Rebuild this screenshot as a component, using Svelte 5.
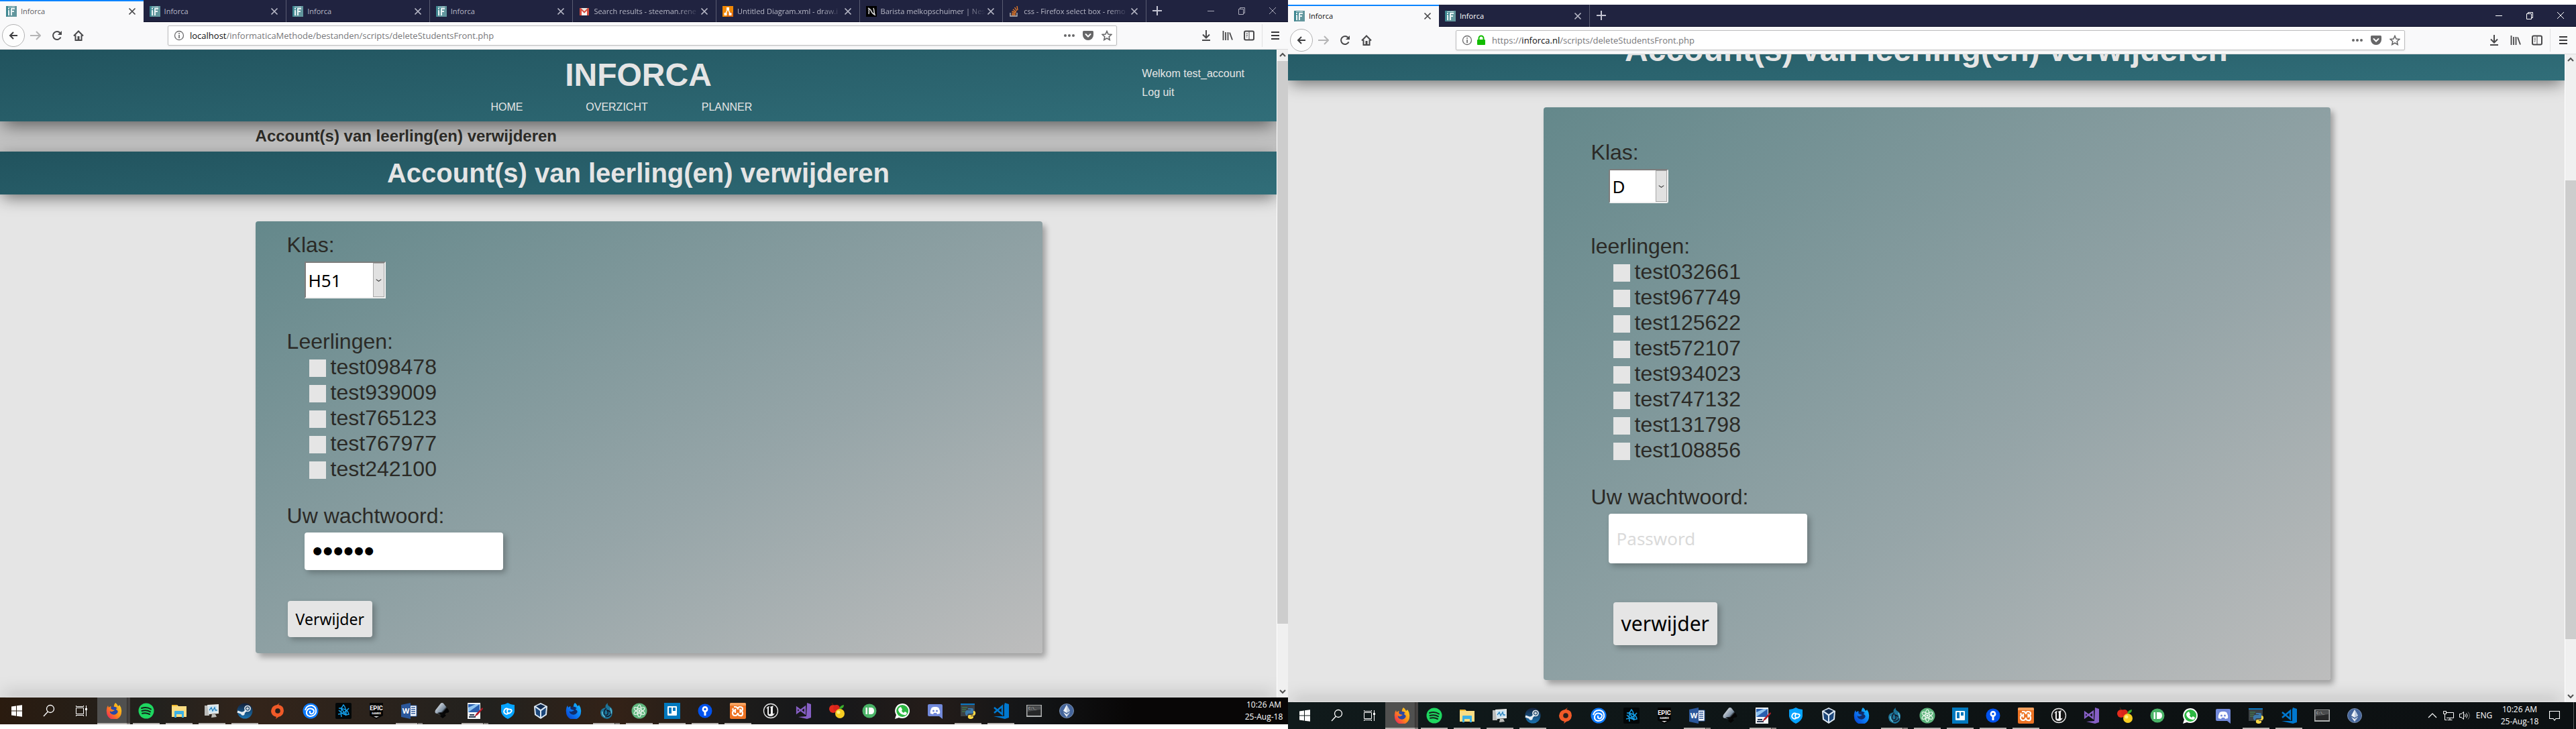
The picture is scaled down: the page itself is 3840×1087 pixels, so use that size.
<script>
  const titleText = 'Account(s) van leerling(en) verwijderen';

  const favicons = {
    inforca:
      '<rect width="16" height="16" fill="#3f8791"/><path d="M9 0h7v16H2z" fill="#8fa9ad" opacity=".45"/><path d="M3 3h2v2H3zM3 6h2v8H3z" fill="#e8f2f3"/><path d="M7 3h6v2H9v2h3v2H9v5H7z" fill="#e8f2f3"/><path d="M3 1h10v1H3z" fill="#cfe0e2"/>',
    gmail:
      '<path d="M1 3h14v11H1z" fill="#e9e6e2"/><path d="M1 3h2l5 5 5-5h2v11h-3V7l-4 4-4-4v7H1z" fill="#d54b3d"/><path d="M4 7l4 4 4-4v7H4z" fill="#f6f4f2"/>',
    draw:
      '<rect width="16" height="16" fill="#f08705"/><path d="M9 9h7v7H6z" fill="#df6c0c"/><path d="M8 4L4.500 12M8 4l3.500 8" stroke="#fff" stroke-width="1.500"/><path d="M6 2h4v4H6zM2.500 10h4v4h-4zM9.500 10h4v4h-4z" fill="#fff"/>',
    nespresso:
      '<rect width="16" height="16" fill="#000"/><path d="M3 3q4 2 5 5t5 5q-1-3-1-5t-1-5M4 5q1 3 0 7" fill="none" stroke="#ddd" stroke-width="1.500"/>',
    stack:
      '<path d="M2 10v5h10v-5" fill="none" stroke="#bcbbbb" stroke-width="1.400"/><path d="M4 13h6M4 10.500l6 .7M4.500 8l6 1.700M6 5l5 3.500M8.500 2l3.500 5M12 0l1 6" stroke="#f48024" stroke-width="1.300"/>'
  };

  const glyphs = {
    back: '<path d="M14 8H3M8 3L3 8l5 5" fill="none" stroke="#3e3e40" stroke-width="2"/>',
    forward: '<path d="M0 8h14M9 2l6 6-6 6" fill="none" stroke="#b5b5b6" stroke-width="2"/>',
    reload: '<path d="M13.500 10.500A6 6 0 1 1 12.500 4" fill="none" stroke="#48484a" stroke-width="2"/><path d="M9 7h6V1z" fill="#48484a"/>',
    home: '<path d="M1 8.500L8 1.500l7 7M3.500 7.500V15h9V7.500" fill="none" stroke="#48484a" stroke-width="2"/><path d="M6.500 9h3v6h-3z" fill="#48484a"/>',
    info: '<circle cx="8" cy="8" r="6.500" fill="none" stroke="#6d6d6e" stroke-width="1.300"/><path d="M7.200 7h1.700v5H7.200zM7.200 4h1.700v1.700H7.200z" fill="#6d6d6e"/>',
    lock: '<path d="M4.500 8V5a3.500 3.500 0 0 1 7 0v3" fill="none" stroke="#12bc00" stroke-width="2"/><rect x="2" y="7" width="12" height="8" rx="1" fill="#12bc00"/>',
    dots: '<g fill="#676768"><circle cx="2" cy="8" r="2"/><circle cx="8" cy="8" r="2"/><circle cx="14" cy="8" r="2"/></g>',
    pocket: '<path d="M1.500 1h13q1.500 0 1.500 1.500V7A8 8 0 0 1 0 7V2.500Q0 1 1.500 1z" fill="#676768"/><path d="M4.500 6L8 9.500 11.500 6" fill="none" stroke="#fff" stroke-width="2" stroke-linecap="round"/>',
    star: '<path d="M8 1.500l2 4.500 4.800.5-3.600 3.200 1 4.800L8 12l-4.200 2.500 1-4.800L1.200 6.500 6 6z" fill="none" stroke="#676768" stroke-width="1.600"/>',
    download: '<path d="M8 0v11M3 6.500L8 11.500l5-5M2 15h12" fill="none" stroke="#48484a" stroke-width="2"/>',
    library: '<path d="M1.500 1v14M5 3v12M8.500 3v12M11 3.500L15 14.500" fill="none" stroke="#48484a" stroke-width="1.800"/>',
    sidebar: '<rect x="1" y="1.500" width="14" height="13" rx="2" fill="none" stroke="#48484a" stroke-width="2"/><path d="M8 2v12M3.500 5h2.500M3.500 7.500h2.500M3.500 10h2" stroke="#48484a" stroke-width="1"/>',
    menu: '<path d="M2 3h12M2 8h12M2 13h12" stroke="#38383a" stroke-width="2"/>',
    close: '<path d="M3.500 3.500l9 9M12.500 3.500l-9 9" stroke="currentColor" stroke-width="1.700"/>',
    plus: '<path d="M8 1v14M1 8h14" stroke="#c3c4d2" stroke-width="2"/>',
    minimise: '<path d="M3 8.500h10" stroke="currentColor" stroke-width="1"/>',
    restore: '<path d="M3.500 5.500h7v8h-7zM5.500 5V3.500h7v8H11" fill="none" stroke="currentColor" stroke-width="1"/>',
    exit: '<path d="M3 3l10 10M13 3L3 13" stroke="currentColor" stroke-width="1"/>',
    up: '<path d="M4 10l4-4 4 4" fill="none" stroke="#505050" stroke-width="2"/>',
    down: '<path d="M4 6l4 4 4-4" fill="none" stroke="#505050" stroke-width="2"/>',
    drop: '<path d="M4 6.500l4 3 4-3" fill="none" stroke="#333" stroke-width="1.200"/>',
    chevron: '<path d="M2 11l6-6 6 6" fill="none" stroke="#fff" stroke-width="1.200"/>',
    network: '<path d="M5 3.500h10.500v8H5M10 11.500V15M6.500 14.500h7M2.500 6v8.500h3M.5 1.500h4v4h-4z" fill="none" stroke="#fff" stroke-width="1"/>',
    volume: '<path d="M.5 5.500h2.500l3.500-3v11l-3.500-3H.5z" fill="none" stroke="#fff"/><path d="M8.500 6q1.500 2 0 4M10.500 4.500q3 3.500 0 7" fill="none" stroke="#fff"/><path d="M13 2.500q4.500 5.500 0 11" fill="none" stroke="#777"/>',
    notify: '<path d="M.5 1.500h15v11H10l-2 2.500-2-2.500H.5z" fill="none" stroke="#fff" stroke-width="1.200"/>'
  };

  const flame = (id, a, b, c, core) =>
    `<defs><linearGradient id="${id}" x1="1" y1="0" x2="0" y2="1"><stop offset="0" stop-color="${a}"/><stop offset=".5" stop-color="${b}"/><stop offset="1" stop-color="${c}"/></linearGradient></defs><path d="M14 0q3 2 4 5 2-1 2-2 4 5 3 11A11 11 0 0 1 1 14Q0 8 3 4l1 3 3-2 1 2h4q-1-4 2-7z" fill="url(#${id})"/><path d="M7 7q6-3 10 1-2 0-2 2 4 2 2 5-3 4-8 2-4-2-3-5 1 2 3 1 3-1 4-2l-4-1q-2-1-2-3z" fill="${core}"/>`;

  const art = (side) => ({
    windows: '<path d="M4 5.500l7-1V11.500H4zM12 4.300l8-1.100v8.300h-8zM4 12.500h7v7l-7-1zM12 12.500h8v8.300l-8-1.100z" fill="#fff"/>',
    search: '<circle cx="14" cy="9" r="5.500" fill="none" stroke="#fff" stroke-width="1.300"/><path d="M10.300 13.200L4 20" stroke="#fff" stroke-width="1.300"/>',
    tasks: '<path d="M4.500 7.500h11v9h-11zM4.500 4v1.500h11V4M4.500 20v-1.500h11V20M19.500 4v16" fill="none" stroke="#fff"/><path d="M18 8h3v3h-3z" fill="#fff"/>',
    firefox: flame('ff' + side, '#ffe226', '#ff8a16', '#ee1267', '#2b48a5'),
    spotify: '<circle cx="12" cy="12" r="11.500" fill="#1ed760"/><path d="M5 8q8-2.500 14 1.500M5.500 12q7-2 12.500 1.300M6 15.800q6-1.500 11 1.200" fill="none" stroke="#14211a" stroke-width="2" stroke-linecap="round"/>',
    explorer: '<path d="M1 3h8l2 2h12v16H1z" fill="#fadd83"/><path d="M1 3h8v2H1z" fill="#f0b92d"/><path d="M5 13q0-1 1-1h12q1 0 1 1v9h-3v-5H8v5H5z" fill="#3bb0e5"/>',
    monitor: '<path d="M1 4h7v15H1z" fill="#babbb9"/><path d="M5 3l17-1v14l-15 1z" fill="#e7e9e8"/><path d="M7 5l13-1v10L8 15z" fill="#cce5f4"/><path d="M8 11l3-4 2 5 3-5 1 4h3" fill="none" stroke="#2681bd" stroke-width="1.300"/><path d="M12 17h5l2 4-8 1z" fill="#bcbcb8"/>',
    steam: `<defs><linearGradient id="st${side}" x1="0" y1="0" x2="0" y2="1"><stop stop-color="#13203a"/><stop offset="1" stop-color="#1a73b1"/></linearGradient></defs><circle cx="12" cy="12" r="11.500" fill="url(#st${side})"/><path d="M1 13l8 3 5-5" fill="none" stroke="#e7edf2" stroke-width="3"/><circle cx="16" cy="8.500" r="4" fill="none" stroke="#e7edf2" stroke-width="1.700"/><circle cx="16" cy="8.500" r="2" fill="#d2d9de"/><circle cx="9" cy="16" r="2.700" fill="#e7edf2"/>`,
    origin: '<path d="M15 0l-2 3q8 1 8 9-1 8-8 9l-4 3 1-3q-8-2-8-9Q3 4 11 3z" fill="#f05a28"/><circle cx="12" cy="12" r="3.800" fill="#271f1a"/>',
    uplay: '<circle cx="12" cy="12" r="11.500" fill="#0d7bff"/><path d="M4 11q2-8 10-7 7 2 6 10-2 6-9 6-6-1-5-7 2-6 8-4 5 2 2 6-3 3-5 0v-3" fill="none" stroke="#fff" stroke-width="2"/>',
    battle: '<rect width="24" height="24" rx="2" fill="#030708"/><g fill="none" stroke="#149ee8" stroke-width="1.500"><path d="M5 8q14 1 15 9-7 3-15-6M9 21Q7 9 12 3q4 4 4 15M4 17q10-1 16-9M8 7l8 12"/></g>',
    epic: '<path d="M2 0h20v19l-10 5-10-5z" fill="#050505"/><text x="12" y="11" text-anchor="middle" font-family="Roboto, sans-serif" font-size="9" font-weight="700" fill="#fff">EPIC</text><text x="12" y="17" text-anchor="middle" font-family="Roboto, sans-serif" font-size="4" font-weight="700" fill="#fff">GAMES</text><path d="M8 20h8l-4 2z" fill="#ddd"/>',
    word: '<path d="M13 4h10v16H13z" fill="#fff" stroke="#2b579a"/><path d="M15 7h6M15 10h6M15 13h6M15 16h6" stroke="#2b579a" stroke-width="1.500"/><path d="M0 3l14-3v24L0 21z" fill="#2b579a"/><text x="7" y="16" text-anchor="middle" font-family="Open Sans, sans-serif" font-size="11" font-weight="700" fill="#fff">W</text>',
    inkscape: `<defs><linearGradient id="ik${side}" x1="0" y1="0" x2="1" y2="1"><stop stop-color="#fff"/><stop offset=".5" stop-color="#7b8da0"/><stop offset=".6" stop-color="#050505"/></linearGradient></defs><path d="M12 0q2 0 3 2l7 9q2 4-4 4l-2 2 2 2-5 4-4-3 2-2-6-2q-5 0-3-5l7-9q1-2 3-2z" fill="url(#ik${side})"/><path d="M5 15q6-2 12 1l-5 4-3-3z" fill="#080808"/>`,
    paint: '<path d="M1 0h19v24H1z" fill="#f4f6f8"/><path d="M2 2h17v12H2z" fill="#2a5fae"/><path d="M2 14V7l11-5h6z" fill="#8fc3f0"/><path d="M4 18h7M3 21h10" stroke="#27364f" stroke-width="2"/><path d="M23 7l-9 9-3 5 5-3 8-9z" fill="#b31b29"/>',
    shield: '<path d="M12 0q5 3 10 3v10q-1 7-10 11Q3 20 2 13V3q5 0 10-3z" fill="#06a4ff"/><path d="M13 9.500q-4-2.500-6 1t1 5.500 5-1M11 14q3 3 5.500 0t0-4-4-.5-1.500 4" fill="none" stroke="#fff" stroke-width="1.900"/>',
    vbox: '<path d="M12 0l10 5-1 13-9 6-9-6L2 5z" fill="#dbe7f3"/><path d="M12 2l7 3-7 5-7-5z" fill="#122c50"/><path d="M4 7l7 5v9l-6-4zM20 7l-7 5v9l6-4z" fill="#1c477b"/>',
    firefoxdev: flame('fd' + side, '#14c8ff', '#0c7cf6', '#0738c9', '#102c69'),
    kraken: '<path d="M14 0q-1 3 2 5 6 3 5 10-1 8-8 9-9-1-10-9 0-7 8-8-2-3 3-7z" fill="#1c7397"/><path d="M12 8q-5 4-3 9 2 3 5 0 1-4-1-6 6 1 5 7-4 4-9 2" fill="none" stroke="#112" stroke-width="1.300"/><path d="M6 13q-1 5 4 8M18 8q2 4 1 8" fill="none" stroke="#67bed4" stroke-width="1.500"/>',
    atom: '<circle cx="12" cy="12" r="11.500" fill="#5fb57d"/><g fill="none" stroke="#edf8ef" stroke-width="1.100"><ellipse cx="12" cy="12" rx="3" ry="9"/><ellipse cx="12" cy="12" rx="3" ry="9" transform="rotate(60 12 12)"/><ellipse cx="12" cy="12" rx="3" ry="9" transform="rotate(-60 12 12)"/></g><circle cx="12" cy="12" r="1.500" fill="#fff"/>',
    trello: '<rect width="24" height="24" fill="#0079bf"/><rect x="5" y="5" width="14" height="14" rx="1" fill="#fff"/><path d="M7 7h4v9H7zM13 7h4v5h-4z" fill="#0079bf"/>',
    sourcetree: '<circle cx="12" cy="12" r="10.500" fill="#0052ee"/><path d="M12 5a4.500 4.500 0 0 1 1.500 8.700V19h-3v-5.300A4.500 4.500 0 0 1 12 5z" fill="#fff"/><circle cx="12" cy="9.500" r="1.700" fill="#0052ee"/>',
    xampp: '<rect width="24" height="24" rx="2" fill="#ed7324"/><path d="M0 2q0-2 2-2h20q2 0 2 2v2H0z" fill="#f7a25f"/><path d="M6 6h3q3 1 3 4 0-4 3-4 4 0 4 3t-3 3q3 0 3 4t-4 3q-3 0-3-4-1 4-4 4-4 0-4-4 0-3 3-3-4-1-2-4M8 9v6M15.500 9v6" fill="none" stroke="#fff" stroke-width="2.200"/>',
    unreal: '<circle cx="12" cy="12" r="10.500" fill="#151515" stroke="#e8e8e8" stroke-width="1.300"/><path d="M5 9q2-4 5-4-1 1-1 3v8q1 2 3 0V8l-1-2 5-2q-1 2-1 4v8q1 1 3-1-2 5-6 5-5 0-5-4V8q-1 0-2 1z" fill="#f0f0f0"/>',
    vs: '<path d="M17 0l6 2v20l-6 2L4 21l12-1z" fill="#865fc5"/><path d="M2 7l12 9V6L2 15z" fill="none" stroke="#865fc5" stroke-width="2.200"/>',
    fruit: '<circle cx="7" cy="9" r="6" fill="#e42b1d"/><circle cx="12" cy="8" r="5" fill="#d9241b"/><circle cx="17" cy="16" r="7" fill="#f7cd22"/><circle cx="15" cy="14" r="2.500" fill="#fff184"/><path d="M16 9q1-5 7-6 0 6-7 6z" fill="#3cae2d"/><path d="M7 4Q6 1 5 0" stroke="#5d2d13" fill="none"/>',
    pushbullet: '<circle cx="12" cy="12" r="10.500" fill="#4ab367"/><path d="M6.500 7H9v10H6.500zM11 7h3q5 0 5 5t-5 5h-3z" fill="#fff"/>',
    whatsapp: '<path d="M12 1a11 11 0 0 1 0 22q-3 0-5-1l-6 2 2-6A11 11 0 0 1 12 1z" fill="#fff"/><circle cx="12.200" cy="12" r="9" fill="#2cb742"/><path d="M8 7l2-1 2 4-1 2q1 2 3 3l2-2 3 2q-1 4-4 3-7-1-9-7 0-3 2-4z" fill="#fff"/>',
    discord: '<path d="M3 2h18q2 0 2 2v20l-5-4H3q-2 0-2-2V4q0-2 2-2z" fill="#7289da"/><path d="M7 7l3-1h4l3 1q3 5 2 9l-4 1-1-2h-4l-1 2-4-1q-1-4 2-9z" fill="#fff"/><circle cx="9.500" cy="12" r="1.500" fill="#7289da"/><circle cx="14.500" cy="12" r="1.500" fill="#7289da"/>',
    python: '<path d="M1 1h21v19H1z" fill="#3b4044"/><path d="M1 1h21v2H1z" fill="#0a78c4"/><path d="M3 7h8M3 10h6M3 13h5" stroke="#43744b" stroke-width="1.500"/><path d="M12 8h6q2 0 2 2v5q0 1-2 1h-5q-2 0-2 3-4 0-3-6 1-2 3-2h5v-1h-4z" fill="#3b78aa"/><path d="M20 12q4 0 3 5-1 2-3 2h-4v1h4v2q-1 2-5 2-4-1-3-4 0-2 2-2h4q2 0 2-3z" fill="#ffd845"/>',
    code: '<path d="M18 0l6 2v20l-6 2-17-4 16 0V3z" fill="#0078cf"/><path d="M2 7l12 10V5L2 15" fill="none" stroke="#0078cf" stroke-width="2.600"/>',
    terminal: '<rect x="1" y="3" width="23" height="18" fill="#aeb0b0"/><rect x="2.500" y="4" width="20" height="15" fill="#262728"/><path d="M3 5h19v5L3 13z" fill="#4b4d4f"/><text x="4" y="10" font-family="Liberation Mono, monospace" font-size="5" fill="#ddd">C:\\_</text>',
    ethereum: '<circle cx="12" cy="12" r="10.500" fill="#45659b" stroke="#7b8fae" stroke-width="1"/><path d="M12 3l5 9-5 3-5-3zM7 14l5 3 5-3-5 7z" fill="#f1f4f8"/><path d="M12 3l5 9-5 3zM12 17l5-3-5 7z" fill="#bccadf"/>'
  });

  const open = ['spotify', 'explorer', 'monitor', 'steam', 'atom', 'trello', 'sourcetree', 'xampp', 'python', 'code'];
  const grouped = ['word', 'paint', 'kraken'];
  const system = ['windows', 'search', 'tasks'];
  const apps = [
    'firefox', 'spotify', 'explorer', 'monitor', 'steam', 'origin', 'uplay', 'battle', 'epic', 'word',
    'inkscape', 'paint', 'shield', 'vbox', 'firefoxdev', 'kraken', 'atom', 'trello', 'sourcetree', 'xampp',
    'unreal', 'vs', 'fruit', 'pushbullet', 'whatsapp', 'discord', 'python', 'code', 'terminal', 'ethereum'
  ];

  const localTabs = [
    { icon: 'inforca', title: 'Inforca' },
    { icon: 'inforca', title: 'Inforca' },
    { icon: 'inforca', title: 'Inforca' },
    { icon: 'inforca', title: 'Inforca' },
    { icon: 'gmail', title: 'Search results - steeman.rene' },
    { icon: 'draw', title: 'Untitled Diagram.xml - draw.i' },
    { icon: 'nespresso', title: 'Barista melkopschuimer | Nes' },
    { icon: 'stack', title: 'css - Firefox select box - remo' }
  ];
  const liveTabs = localTabs.slice(0, 2);

  const localStudents = ['test098478', 'test939009', 'test765123', 'test767977', 'test242100'];
  const liveStudents = [
    'test032661', 'test967749', 'test125622', 'test572107',
    'test934023', 'test747132', 'test131798', 'test108856'
  ];
</script>

{#snippet glyph(name)}
  <svg class="glyph" viewBox="0 0 16 16" aria-hidden="true">{@html glyphs[name]}</svg>
{/snippet}

{#snippet chrome(tabs, live)}
  <div class="tabstrip" class:live>
    <div class="tabs">
      {#each tabs as tab, i}
        <div class="tab" class:active={i === 0}>
          <svg class="glyph" viewBox="0 0 16 16" aria-hidden="true">{@html favicons[tab.icon]}</svg>
          <span class="tab-title" class:long={tab.title.length > 20}>{tab.title}</span>
          <button class="tab-close" aria-label="Close tab">{@render glyph('close')}</button>
        </div>
      {/each}
    </div>
    <button class="new-tab" aria-label="New tab">{@render glyph('plus')}</button>
    <div class="controls">
      <button aria-label="Minimise">{@render glyph('minimise')}</button>
      <button aria-label="Restore">{@render glyph('restore')}</button>
      <button aria-label="Close">{@render glyph('exit')}</button>
    </div>
  </div>
  <div class="toolbar">
    <button class="back" aria-label="Back">{@render glyph('back')}</button>
    <button class="tool" aria-label="Forward">{@render glyph('forward')}</button>
    <button class="tool" aria-label="Reload">{@render glyph('reload')}</button>
    <button class="tool" aria-label="Home">{@render glyph('home')}</button>
    <div class="urlbar">
      {@render glyph('info')}
      {#if live}
        {@render glyph('lock')}
        <span class="url">https://<b>inforca.nl</b>/scripts/deleteStudentsFront.php</span>
      {:else}
        <span class="url"><b>localhost</b>/informaticaMethode/bestanden/scripts/deleteStudentsFront.php</span>
      {/if}
      <button aria-label="Page actions">{@render glyph('dots')}</button>
      <button aria-label="Save to Pocket">{@render glyph('pocket')}</button>
      <button aria-label="Bookmark">{@render glyph('star')}</button>
    </div>
    <button class="tool" aria-label="Downloads">{@render glyph('download')}</button>
    <button class="tool" aria-label="Library">{@render glyph('library')}</button>
    <button class="tool" aria-label="Sidebars">{@render glyph('sidebar')}</button>
    <span class="divider"></span>
    <button class="tool" aria-label="Menu">{@render glyph('menu')}</button>
  </div>
{/snippet}

{#snippet scrollbar()}
  <div class="scrollbar">
    <span class="arrow">{@render glyph('up')}</span>
    <span class="before"></span>
    <span class="thumb"></span>
    <span class="after"></span>
    <span class="arrow">{@render glyph('down')}</span>
  </div>
{/snippet}

{#snippet form(side, klas, listTitle, students, buttonText)}
  <form class="card {side}" onsubmit={(e) => e.preventDefault()}>
    <label class="heading" for="klas-{side}">Klas:</label>
    <div class="picker">
      <select id="klas-{side}"><option>{klas}</option></select>
      <span class="drop">{@render glyph('drop')}</span>
    </div>
    <fieldset>
      <legend class="heading">{listTitle}</legend>
      {#each students as student}
        <label class="student"><input type="checkbox" />{student}</label>
      {/each}
    </fieldset>
    <label class="heading" for="password-{side}">Uw wachtwoord:</label>
    {#if side === 'local'}
      <input class="password" id="password-local" type="password" value="geheim" />
    {:else}
      <input class="password" id="password-live" type="password" placeholder="Password" />
    {/if}
    <button class="submit">{buttonText}</button>
  </form>
{/snippet}

{#snippet taskbar(side)}
  {@const pictures = art(side)}
  <div class="taskbar {side}">
    {#each system as name}
      <button class="system" aria-label={name}><svg class="app-icon" viewBox="0 0 24 24">{@html pictures[name]}</svg></button>
    {/each}
    {#each apps as name}
      <button
        class="app"
        class:current={name === 'firefox'}
        class:open={open.includes(name)}
        class:grouped={grouped.includes(name)}
        aria-label={name}
      ><svg class="app-icon" viewBox="0 0 24 24">{@html pictures[name]}</svg></button>
    {/each}
    <div class="tray">
      {#if side === 'live'}
        <button aria-label="Hidden icons">{@render glyph('chevron')}</button>
        <button aria-label="Network">{@render glyph('network')}</button>
        <button aria-label="Volume">{@render glyph('volume')}</button>
        <span class="language">ENG</span>
      {/if}
      <div class="clock"><span>10:26 AM</span><span>25-Aug-18</span></div>
      {#if side === 'live'}
        <button class="notify" aria-label="Notifications">{@render glyph('notify')}</button>
        <span class="desktop-edge"></span>
      {/if}
    </div>
  </div>
{/snippet}

<div class="desktop">
  <section class="screen local">
    {@render chrome(localTabs, false)}
    <div class="viewport">
      <main class="page">
        <header class="masthead">
          <h1>INFORCA</h1>
          <nav>
            <a href="#home">HOME</a>
            <a href="#overzicht">OVERZICHT</a>
            <a href="#planner">PLANNER</a>
          </nav>
          <div class="account">
            <span>Welkom test_account</span>
            <a href="#logout">Log uit</a>
          </div>
        </header>
        <div class="crumb"><h3>{titleText}</h3></div>
        <div class="banner"><h2>{titleText}</h2></div>
        {@render form('local', 'H51', 'Leerlingen:', localStudents, 'Verwijder')}
        <div class="footer-edge"></div>
      </main>
      {@render scrollbar()}
    </div>
    {@render taskbar('local')}
  </section>
  <section class="screen live">
    {@render chrome(liveTabs, true)}
    <div class="viewport">
      <main class="page">
        <div class="banner scrolled"><h2>{titleText}</h2></div>
        {@render form('live', 'D', 'leerlingen:', liveStudents, 'verwijder')}
        <div class="footer-edge"></div>
      </main>
      {@render scrollbar()}
    </div>
    {@render taskbar('live')}
  </section>
</div>

<style>
  :global(body) {
    margin: 0;
    background: #fff;
  }
  * {
    box-sizing: border-box;
  }
  button {
    display: flex;
    align-items: center;
    justify-content: center;
    padding: 0;
    border: 0;
    background: none;
    color: inherit;
    font: inherit;
  }
  h1, h2, h3 {
    margin: 0;
  }
  a {
    color: inherit;
    text-decoration: none;
  }
  .desktop {
    display: flex;
    min-height: 100vh;
    font-family: "Liberation Sans", Arial, sans-serif;
  }
  .screen {
    flex: 1 1 0;
    min-width: 0;
    display: flex;
    flex-direction: column;
  }
  .screen.local {
    padding-bottom: 7px;
  }
  .screen.live {
    padding-top: 7px;
  }
  .glyph {
    display: block;
    flex: none;
    width: 16px;
    height: 16px;
  }

  /* Browser chrome */
  .tabstrip {
    display: flex;
    height: 33px;
    background: #202340;
    border-bottom: 1px solid #12142b;
    color: #b7b8c6;
    font: 11px/16px "Open Sans", "Segoe UI", sans-serif;
  }
  .tabs {
    flex: 0 0 89%;
    display: grid;
    grid-template-columns: repeat(8, 1fr);
    height: 33px;
  }
  .live .tabs {
    flex: 0 0 450px;
    grid-template-columns: repeat(2, 1fr);
  }
  .tab {
    display: flex;
    align-items: center;
    min-width: 0;
    padding: 0 9px;
    border-right: 1px solid #5a5c72;
  }
  .tab.active {
    background: #f9f9fa;
    border-top: 2px solid #0a84ff;
    border-right: 0;
    padding-bottom: 2px;
    color: #5b5b5f;
  }
  .live .tab {
    color: #fff;
  }
  .live .tab.active {
    color: #0c0c0d;
  }
  .tab-title {
    flex: 1;
    min-width: 0;
    padding-left: 6px;
    overflow: hidden;
    white-space: nowrap;
  }
  .tab-title.long {
    mask-image: linear-gradient(to right, #000 calc(100% - 30px), transparent);
  }
  .tab-close {
    color: #b7b8c6;
  }
  .tab.active .tab-close {
    color: #48484a;
  }
  .new-tab {
    width: 33px;
  }
  .controls {
    display: flex;
    margin-left: auto;
    color: #a9a9b8;
  }
  .live .controls {
    color: #fff;
  }
  .controls button {
    width: 46px;
  }
  .toolbar {
    display: flex;
    align-items: center;
    height: 41px;
    padding: 0 3px;
    background: #f9f9fa;
    border-bottom: 1px solid #dcdcdd;
  }
  .back {
    width: 34px;
    height: 34px;
    border: 1px solid #b2b2b3;
    border-radius: 50%;
    background: #fdfdfd;
  }
  .tool {
    width: 32px;
    height: 32px;
  }
  .urlbar {
    flex: 1;
    display: flex;
    align-items: center;
    height: 30px;
    margin: 0 117px;
    padding-left: 8px;
    background: #fff;
    border: 1px solid #bebebf;
    border-radius: 2px;
    box-shadow: 0 1px 3px rgba(0, 0, 0, 0.08);
    font: 13px/20px "Open Sans", "Segoe UI", sans-serif;
    color: #77777a;
  }
  .urlbar .glyph + .glyph {
    margin-left: 5px;
  }
  .url {
    flex: 1;
    padding-left: 8px;
  }
  .url b {
    font-weight: 400;
    color: #0c0c0d;
  }
  .urlbar button {
    width: 28px;
  }
  .divider {
    width: 1px;
    height: 34px;
    margin: 0 3px;
    background: #e0e0e1;
  }

  /* Page viewport */
  .viewport {
    flex: 1;
    display: flex;
  }
  .page {
    flex: 1;
    min-width: 0;
    display: flex;
    flex-direction: column;
    overflow: hidden;
    background: #e5e5e5;
    color: #2b2a26;
  }
  .scrollbar {
    flex: 0 0 16px;
    display: flex;
    flex-direction: column;
    background: #f0f0f0;
    border-left: 1px solid #fff;
  }
  .arrow {
    height: 17px;
  }
  .thumb {
    flex: 839;
    background: #cdcdcd;
  }
  .before {
    flex: 0;
  }
  .after {
    flex: 93;
  }
  .live .before {
    flex: 171;
  }
  .live .thumb {
    flex: 684;
  }
  .live .after {
    flex: 77;
  }

  /* Site header */
  .masthead {
    display: grid;
    grid-template-columns: 1fr auto 1fr;
    grid-template-rows: 70px auto;
    align-items: start;
    height: 107px;
    background: linear-gradient(175deg, #21535e, #316e79);
    box-shadow: 0 10px 25px -5px rgba(0, 0, 0, 0.55);
    color: #e5e5e5;
    z-index: 1;
  }
  h1 {
    grid-column: 2;
    padding-top: 10px;
    text-align: center;
    font-size: 48px;
    line-height: 56px;
  }
  nav {
    grid-column: 2;
    grid-row: 2;
    display: grid;
    grid-template-columns: repeat(3, 164px);
    padding: 6px 64px 0 0;
    text-align: center;
    font-size: 16px;
    line-height: 20px;
  }
  .account {
    grid-column: 3;
    grid-row: 1 / 3;
    justify-self: end;
    display: flex;
    flex-direction: column;
    padding: 22px 48px 0 0;
    font-size: 16px;
    line-height: 28px;
  }
  .crumb {
    padding: 8px 20% 9px;
    background: #c2c2c2;
  }
  h3 {
    font-size: 24px;
    line-height: 28px;
    white-space: nowrap;
  }
  .crumb h3 {
    position: relative;
    z-index: 2;
  }
  .banner {
    height: 64px;
    background: linear-gradient(175deg, #21535e, #316e79);
    box-shadow: 0 7px 25px -3px rgba(0, 0, 0, 0.55);
    color: #e5e5e5;
    text-align: center;
  }
  h2 {
    padding-top: 9px;
    font-size: 40px;
    line-height: 46px;
    white-space: nowrap;
  }
  .banner.scrolled {
    display: flex;
    align-items: flex-end;
    justify-content: center;
    height: 39px;
    overflow: hidden;
    background: linear-gradient(177deg, #265c67, #316e79);
  }
  .scrolled h2 {
    padding: 0 0 17px;
    font-size: 48px;
    line-height: 56px;
  }

  /* Form */
  .card {
    display: flex;
    flex-direction: column;
    align-items: flex-start;
    width: calc(60% + 32px);
    margin: 40px 0 0 20%;
    padding: 16px 47px 24px;
    border-radius: 4px;
    background: linear-gradient(to bottom right, #64888b, #96a5a8 60%, #bdbdbd);
    box-shadow: 5px 6px 8px rgba(0, 0, 0, 0.3);
    font-size: 32px;
    line-height: 38px;
  }
  .card.live {
    padding: 48px 71px 52px;
  }
  .heading {
    padding: 0;
  }
  .picker {
    display: flex;
    width: 121px;
    height: 55px;
    margin: 6px 0 45px 26px;
    border: 2px solid;
    border-color: #7d7d7d #f2f2f2 #f2f2f2 #7d7d7d;
    background: #fff;
  }
  .live .picker {
    width: 89px;
    height: 51px;
    border-radius: 3px;
  }
  select {
    flex: 1;
    min-width: 0;
    padding: 0 0 0 4px;
    border: 0;
    background: #fff;
    color: #000;
    appearance: none;
    font: 26px/38px "Noto Sans", Tahoma, sans-serif;
  }
  .drop {
    display: flex;
    align-items: center;
    width: 17px;
    border: 1px solid #a8a8a8;
    background: #e1e1e1;
  }
  .drop .glyph {
    width: 15px;
  }
  fieldset {
    display: flex;
    flex-direction: column;
    margin: 0 0 32px;
    padding: 0;
    border: 0;
  }
  .student {
    display: flex;
    gap: 7px;
    padding-left: 33px;
  }
  .student input {
    width: 25px;
    height: 26px;
    margin: 8px 0 0;
    appearance: none;
    background: #e5e5e5;
  }
  .password {
    width: 296px;
    height: 56px;
    margin: 6px 0 46px 26px;
    padding: 0 12px;
    border: 0;
    border-radius: 4px;
    background: #fff;
    box-shadow: 4px 4px 8px rgba(0, 0, 0, 0.25);
    color: #000;
    font: 44px "Liberation Sans", Arial, sans-serif;
  }
  .live .password {
    height: 74px;
    margin-bottom: 58px;
    font: 26px "Noto Sans", Tahoma, sans-serif;
  }
  .password::placeholder {
    color: #dadada;
  }
  .submit {
    height: 54px;
    margin-left: 1px;
    padding: 0 12px;
    border-radius: 4px;
    background: #e5e5e5;
    box-shadow: 4px 4px 8px rgba(0, 0, 0, 0.25);
    color: #000;
    font: 23px/38px "Noto Sans", Tahoma, sans-serif;
  }
  .live .submit {
    height: 64px;
    margin-left: 33px;
    font-size: 30px;
  }
  .footer-edge {
    height: 1px;
    margin: auto 8px 0;
    box-shadow: 0 0 25px 2px rgba(0, 0, 0, 0.5);
  }

  /* Taskbar */
  .taskbar {
    display: flex;
    height: 40px;
    background: linear-gradient(to right, #2a1b0f, #22211e 12%, #33241a 20%, #22211e 38%, #332217 48%, #1c1b1a 58%, #15171a 64%, #241c19 72%, #131517 80%, #080606 88%);
  }
  .taskbar.live {
    background: linear-gradient(to right, #101a1b, #0d1213 60%, #0c1012);
  }
  .system {
    width: 48px;
  }
  .system:first-child {
    width: 49px;
  }
  .app {
    flex: none;
    width: 49px;
    border: solid transparent;
    border-width: 0 5px 0 4px;
    background-clip: padding-box;
  }
  .app-icon {
    display: block;
    flex: none;
    width: 24px;
    height: 24px;
  }
  .app.open {
    background: linear-gradient(#b5b1ae, #b5b1ae) bottom / 100% 2px no-repeat padding-box;
  }
  .app.grouped {
    background:
      linear-gradient(to right, #b5b1ae 32px, #44403c 32px 33px, #85817e 33px) bottom / 100% 2px no-repeat padding-box;
  }
  .app.current {
    border: 0;
    background:
      linear-gradient(to right, #b5b1ae 44px, #85817e 44px) bottom / 100% 2px no-repeat,
      linear-gradient(to right, #50504f 44px, #33302e 44px 45px, #444140 45px);
  }
  .tray {
    display: flex;
    align-items: center;
    margin-left: auto;
    color: #fff;
    font: 12px/18px "Open Sans", "Segoe UI", sans-serif;
  }
  .tray button {
    width: 24px;
  }
  .language {
    width: 34px;
    text-align: center;
  }
  .clock {
    display: flex;
    flex-direction: column;
    width: 72px;
    text-align: center;
    white-space: nowrap;
  }
  .live .clock {
    margin-right: 6px;
  }
  .tray .notify {
    width: 20px;
  }
  .desktop-edge {
    width: 1px;
    height: 40px;
    margin: 0 3px 0 18px;
    background: #5a5e5f;
  }
</style>
